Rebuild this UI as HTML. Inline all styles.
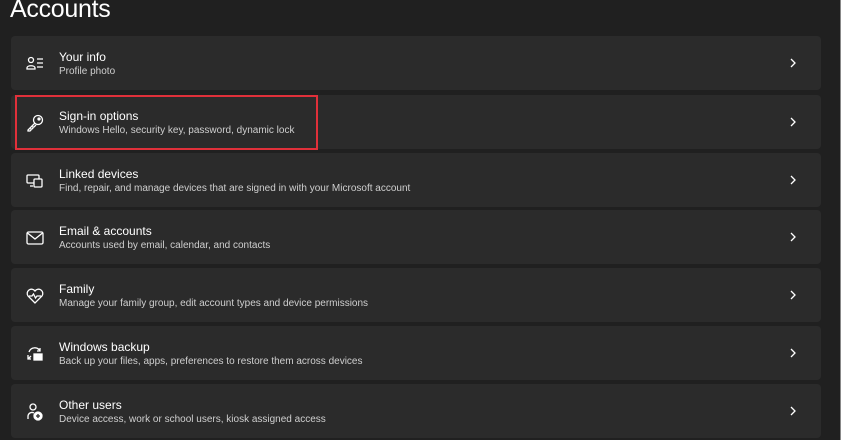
<!DOCTYPE html><html><head><style>
body{margin:0;width:845px;height:442px;background:#fff;overflow:hidden;font-family:"Liberation Sans",sans-serif}
#w{position:absolute;left:0;top:0;width:840px;height:440px;background:#202020;border-right:1px solid #888}
h1{position:absolute;left:10px;top:-5px;margin:0;color:#fff;font-size:25px;font-weight:normal;letter-spacing:-.3px}
.c{position:absolute;left:11px;width:810px;height:54px;background:#2b2b2b;border-radius:4px}
.t{position:absolute;left:48px;top:14px;color:#fff;font-size:12px}
.s{position:absolute;left:48px;top:30px;color:#cfcfcf;font-size:10px}
.i{position:absolute;left:14px;top:18px;width:20px;height:20px}
.ch{position:absolute;left:777px;top:21px}
#r{position:absolute;left:15px;top:95px;width:299px;height:51px;border:2px solid #e0303a}
</style></head><body><div id="w">
<h1>Accounts</h1>
<div class="c" style="top:36px"><svg class="i" viewBox="0 0 20 20" fill="none" stroke="#fff" stroke-width="1.3"><circle cx="6" cy="6" r="2.5"/><path d="M2 14c0-3 8-3 8 0v1H2z"/><path d="M12 5h6M12 9h6M12 13h6"/></svg><div class="t">Your info</div><div class="s">Profile photo</div><svg class="ch" width="10" height="12"><path d="M3 2l4 4-4 4" stroke="#fff" fill="none" stroke-width="1.3"/></svg></div>
<div class="c" style="top:95px"><svg class="i" viewBox="0 0 20 20" fill="none" stroke="#fff" stroke-width="1.3"><circle cx="13" cy="7" r="4.5"/><circle cx="14" cy="6" r="1" fill="#fff"/><path d="M10 10l-7 7v1h2l1-1v-1h1l1-1v-1h1l2-2"/></svg><div class="t">Sign-in options</div><div class="s">Windows Hello, security key, password, dynamic lock</div><svg class="ch" width="10" height="12"><path d="M3 2l4 4-4 4" stroke="#fff" fill="none" stroke-width="1.3"/></svg></div>
<div class="c" style="top:153px"><svg class="i" viewBox="0 0 20 20" fill="none" stroke="#fff" stroke-width="1.3"><rect x="2" y="4" width="12" height="8" rx="1"/><rect x="9" y="8" width="8" height="8" rx="1" fill="#2b2b2b"/><path d="M5 15h3"/></svg><div class="t">Linked devices</div><div class="s">Find, repair, and manage devices that are signed in with your Microsoft account</div><svg class="ch" width="10" height="12"><path d="M3 2l4 4-4 4" stroke="#fff" fill="none" stroke-width="1.3"/></svg></div>
<div class="c" style="top:210px"><svg class="i" viewBox="0 0 20 20" fill="none" stroke="#fff" stroke-width="1.3"><rect x="2" y="4" width="16" height="12" rx="1.5"/><path d="M2.5 5l7.5 6 7.5-6"/></svg><div class="t">Email &amp; accounts</div><div class="s">Accounts used by email, calendar, and contacts</div><svg class="ch" width="10" height="12"><path d="M3 2l4 4-4 4" stroke="#fff" fill="none" stroke-width="1.3"/></svg></div>
<div class="c" style="top:268px"><svg class="i" viewBox="0 0 20 20" fill="none" stroke="#fff" stroke-width="1.3"><path d="M10 17L3 10a4 4 0 017-5 4 4 0 017 5z"/><path d="M4 10h3l1.5-2 2 4 1.5-2h4"/></svg><div class="t">Family</div><div class="s">Manage your family group, edit account types and device permissions</div><svg class="ch" width="10" height="12"><path d="M3 2l4 4-4 4" stroke="#fff" fill="none" stroke-width="1.3"/></svg></div>
<div class="c" style="top:326px"><svg class="i" viewBox="0 0 20 20" fill="none" stroke="#fff" stroke-width="1.3"><path d="M4 8a6 6 0 0111-1M15 4v3h-3"/><rect x="9" y="10" width="8" height="6" fill="#fff"/><path d="M3 11v4h3M3 15l3-3"/></svg><div class="t">Windows backup</div><div class="s">Back up your files, apps, preferences to restore them across devices</div><svg class="ch" width="10" height="12"><path d="M3 2l4 4-4 4" stroke="#fff" fill="none" stroke-width="1.3"/></svg></div>
<div class="c" style="top:384px"><svg class="i" viewBox="0 0 20 20" fill="none" stroke="#fff" stroke-width="1.3"><circle cx="8" cy="5" r="3"/><path d="M3 17v-3a4 4 0 016-3"/><circle cx="13" cy="14" r="4" fill="#fff"/><path d="M13 12v4M11 14h4" stroke="#2b2b2b"/></svg><div class="t">Other users</div><div class="s">Device access, work or school users, kiosk assigned access</div><svg class="ch" width="10" height="12"><path d="M3 2l4 4-4 4" stroke="#fff" fill="none" stroke-width="1.3"/></svg></div>
<div id="r"></div>
</div></body></html>
